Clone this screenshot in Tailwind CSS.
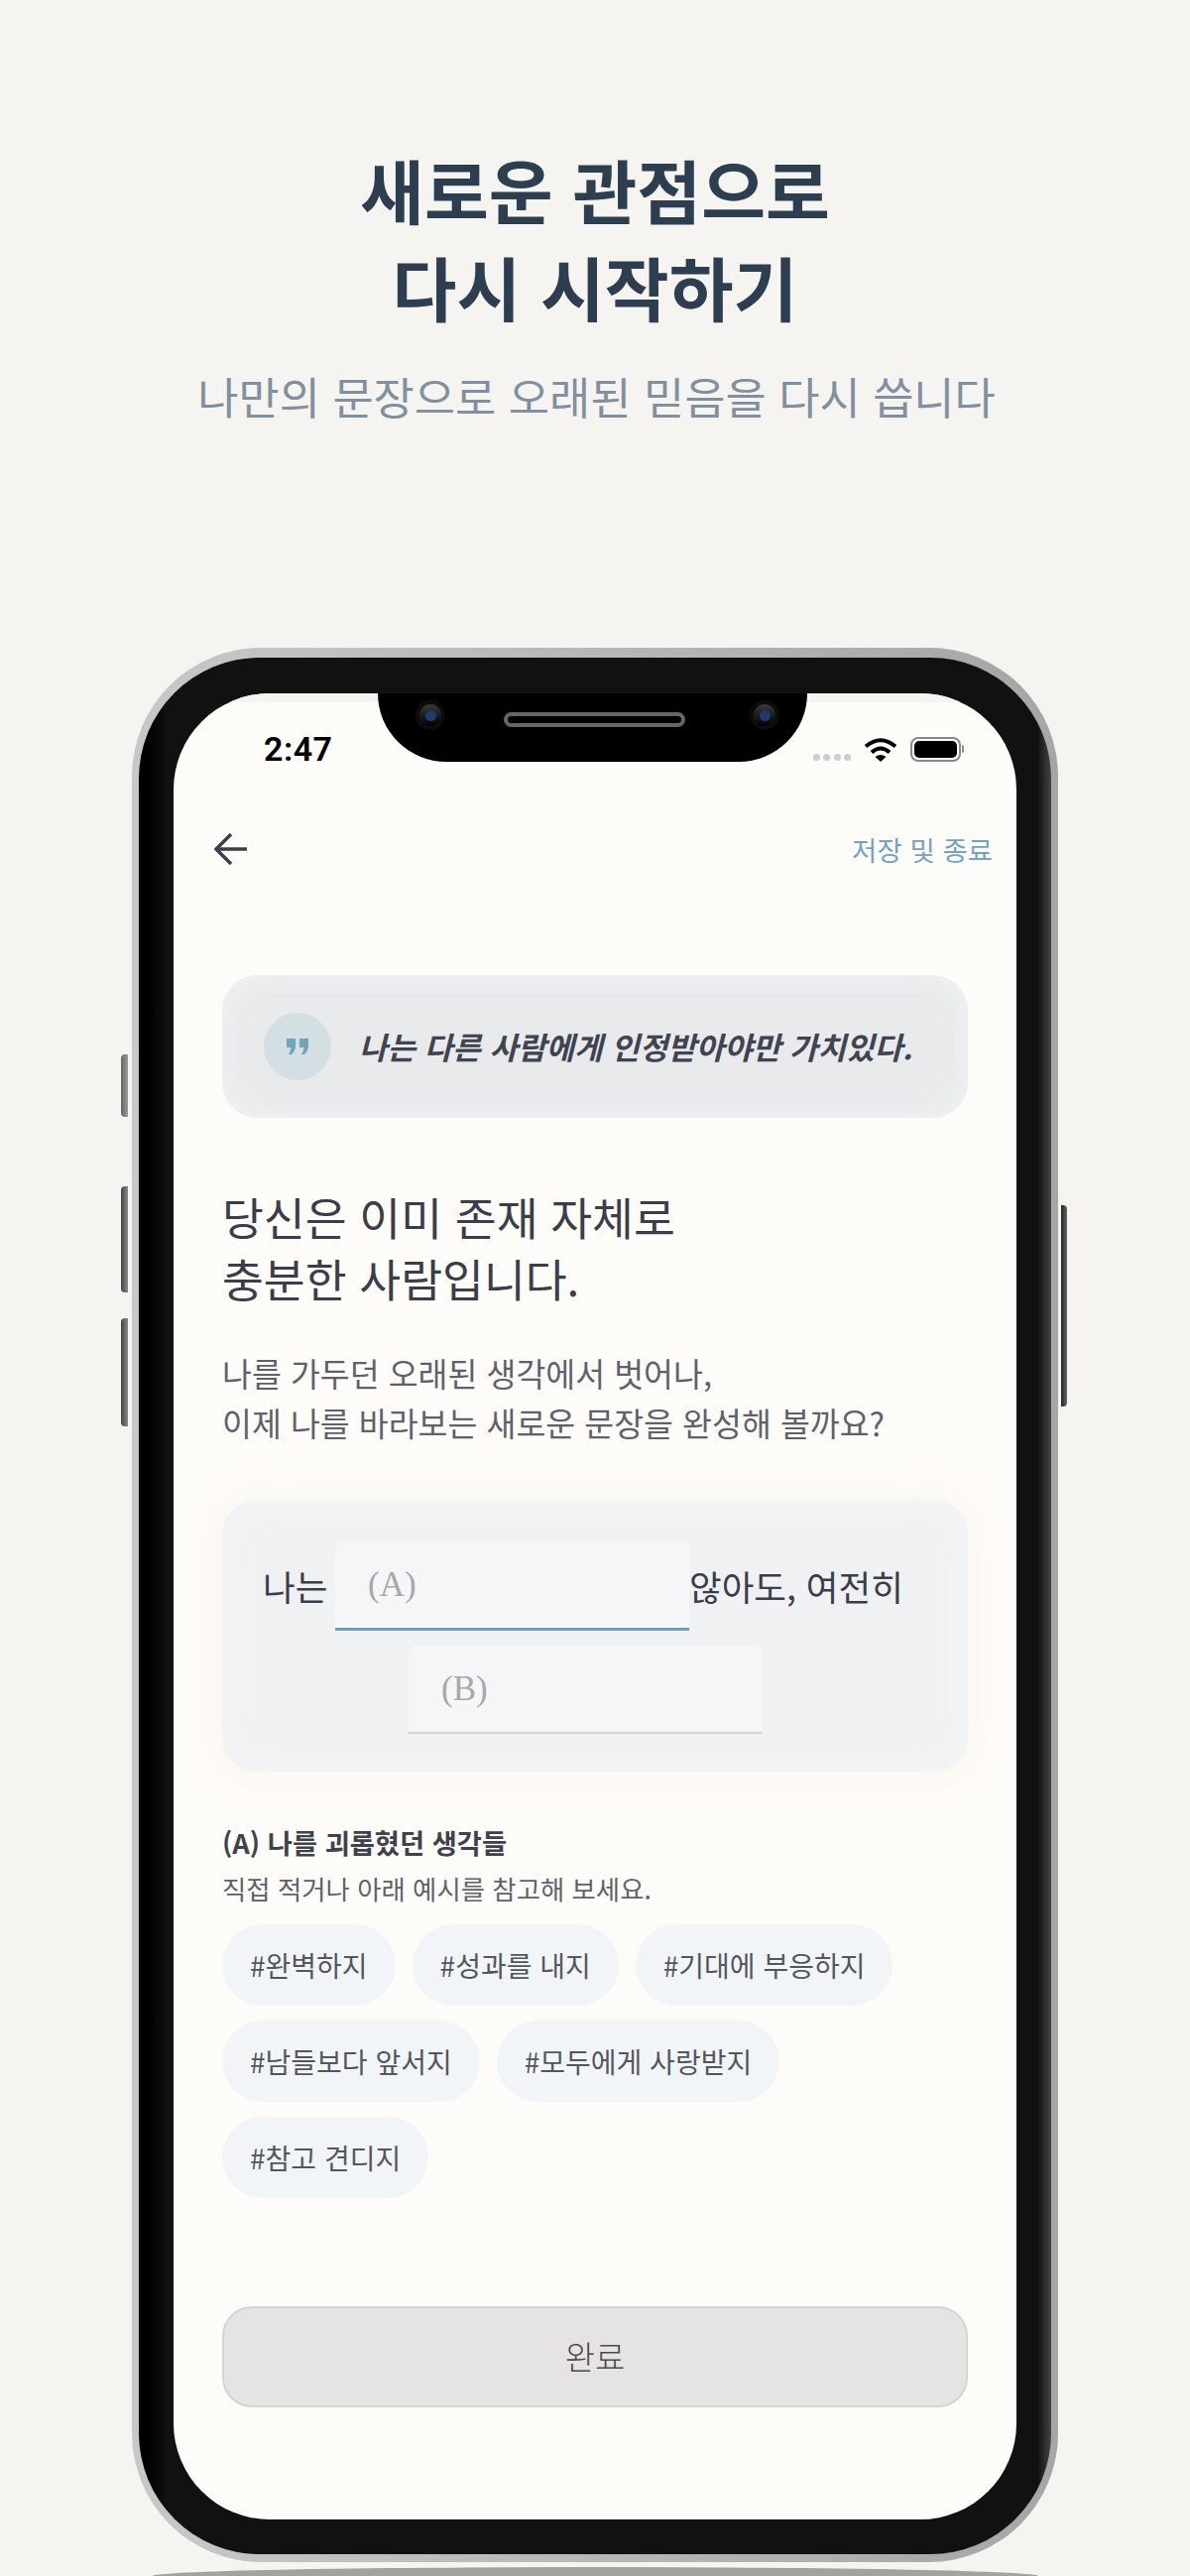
<!DOCTYPE html>
<html lang="ko">
<head>
  <meta charset="UTF-8">
  <meta name="viewport" content="width=device-width, initial-scale=1.0">
  <title>새로운 관점으로 다시 시작하기</title>
  <script src="https://cdn.jsdelivr.net/npm/@tailwindcss/browser@4"></script>
</head>
<body class="bg-[#f5f4f1] font-['Noto_Sans_CJK_KR','Noto_Sans',sans-serif]">
  <div class="relative h-[2597px] w-[1200px] overflow-hidden">
    <!-- 상단 타이틀 -->
    <div class="pt-[141px] text-center">
      <h1 class="text-[70.500px] leading-[98px] font-bold text-[#2c3e50]">새로운 관점으로<br>다시 시작하기</h1>
      <p class="mt-[32px] pl-[3px] text-[44.800px] leading-[60px] text-[#8090a0]">나만의 문장으로 오래된 믿음을 다시 씁니다</p>
    </div>

    <!-- 폰 프레임 -->
    <div class="relative mt-[224px] ml-[133px] w-[934px] h-[1930px] rounded-[130px] bg-[linear-gradient(90deg,#c8c8c8,#a6a6a6)] pt-[10px] px-[7px] pb-[8px]">
      <!-- 사이드 버튼 -->
      <div class="absolute left-[-11px] top-[410px] h-[63px] w-[7px] rounded-l-sm bg-[linear-gradient(90deg,#666,#999)]"></div>
      <div class="absolute left-[-11px] top-[543px] h-[107px] w-[7px] rounded-l-sm bg-[linear-gradient(90deg,#444,#888)]"></div>
      <div class="absolute left-[-11px] top-[676px] h-[109px] w-[7px] rounded-l-sm bg-[linear-gradient(90deg,#444,#888)]"></div>
      <div class="absolute right-[-9px] top-[562px] h-[203px] w-[6px] rounded-r-sm bg-[linear-gradient(90deg,#222,#666)]"></div>

      <div class="h-full rounded-[122px] bg-[linear-gradient(90deg,#000_0,#000_1%,#111_3%,#111_98.500%,#444_100%)] pt-[36px] pb-[35px] px-[35px]">
        <div class="relative flex h-full flex-col overflow-hidden rounded-[97px] bg-[#fefcf8]">
          <div class="absolute inset-x-0 top-0 h-[9px] bg-[#f5f4f1]"></div>

          <!-- 노치 -->
          <div class="absolute left-[206px] top-0 flex h-[69px] w-[433px] items-start rounded-b-[70px] bg-black pl-[38px]">
            <div class="mt-[7px] flex h-[30px] w-[30px] items-center justify-center rounded-full bg-[#0c0c0c]">
              <div class="flex h-[22px] w-[22px] items-center justify-center rounded-full bg-[linear-gradient(180deg,#3a3a3a,#000)]">
                <div class="h-[11px] w-[11px] rounded-full bg-[#1d3b6c]"></div>
              </div>
            </div>
            <div class="mt-[19px] ml-[59px] h-[15px] w-[183px] rounded-full border-[4px] border-[#666]"></div>
            <div class="mt-[7px] ml-[65px] flex h-[30px] w-[30px] items-center justify-center rounded-full bg-[#0c0c0c]">
              <div class="flex h-[22px] w-[22px] items-center justify-center rounded-full bg-[linear-gradient(180deg,#3a3a3a,#000)]">
                <div class="h-[11px] w-[11px] rounded-full bg-[#1d3b6c]"></div>
              </div>
            </div>
          </div>

          <!-- 상태바 -->
          <div class="flex h-[112px] shrink-0 items-center justify-between pl-[91px] pr-[53px]">
            <span class="font-['Roboto',sans-serif] text-[34px] font-semibold tracking-[0.5px] text-black">2:47</span>
            <div class="flex items-center">
              <div class="mt-[16px] flex gap-[3.500px]">
                <span class="h-[7px] w-[7px] rounded-full bg-[#cfcdcb]"></span>
                <span class="h-[7px] w-[7px] rounded-full bg-[#cfcdcb]"></span>
                <span class="h-[7px] w-[7px] rounded-full bg-[#cfcdcb]"></span>
                <span class="h-[7px] w-[7px] rounded-full bg-[#cfcdcb]"></span>
              </div>
              <svg class="ml-[13px]" width="34" height="25" viewBox="0 0 34 25">
                <path d="M2 9.500Q17 -3 32 9.500" fill="none" stroke="#000" stroke-width="4"/>
                <path d="M8 15.500Q17 7.500 26 15.500" fill="none" stroke="#000" stroke-width="4"/>
                <path d="M11.500 20Q17 16 22.500 20L17 25Z" fill="#000"/>
              </svg>
              <div class="ml-[13px] flex items-center">
                <div class="h-[25px] w-[51px] rounded-[8px] border-2 border-[#8a8a86] p-[2px]">
                  <div class="h-full w-full rounded-[5px] bg-black"></div>
                </div>
                <div class="ml-[1px] h-[8px] w-[2px] rounded-r bg-[#8a8a86]"></div>
              </div>
            </div>
          </div>

          <!-- 헤더 -->
          <div class="flex h-[90px] shrink-0 items-center justify-between pl-[41px] pr-[24px]">
            <svg width="33" height="32" viewBox="0 0 33 32" fill="none" stroke="#3d3d4d" stroke-width="3.500">
              <path d="M17 1L2 16L17 31"/>
              <path d="M2 16H33"/>
            </svg>
            <span class="text-[27.500px] leading-[36px] text-[#74a3bf]">저장 및 종료</span>
          </div>

          <div class="flex flex-1 flex-col px-[49px]">
            <!-- 인용 카드 -->
            <div class="mt-[82px] flex h-[144px] shrink-0 items-center rounded-[36px] bg-[#e8eaec] pl-[42px] shadow-[inset_0_0_30px_#f1f4f4]">
              <div class="flex h-[68px] w-[68px] shrink-0 items-center justify-center rounded-full bg-[#d3dfe3]">
                <svg width="22" height="16" viewBox="0 0 22 16" fill="#74a3bf">
                  <path d="M0 0H9V7Q9 12 5 16H2Q4.500 12 4.500 9H0Z"/>
                  <path d="M13 0H22V7Q22 12 18 16H15Q17.500 12 17.500 9H13Z"/>
                </svg>
              </div>
              <p class="ml-[28px] whitespace-nowrap text-[31px] leading-[40px] font-semibold italic text-[#3f4450]">나는 다른 사람에게 인정받아야만 가치있다.</p>
            </div>

            <h2 class="mt-[68px] text-[45.500px] leading-[62px] font-normal text-[#3a3d4a]">당신은 이미 존재 자체로<br>충분한 사람입니다.</h2>
            <p class="mt-[40px] text-[32.500px] leading-[50px] text-[#5e616b]">나를 가두던 오래된 생각에서 벗어나,<br>이제 나를 바라보는 새로운 문장을 완성해 볼까요?</p>

            <!-- 문장 입력 -->
            <div class="mt-[54px] h-[273px] shrink-0 rounded-[34px] bg-[#eff1f3] pt-[40px] pl-[41px] shadow-[0_0_45px_#f9f3ec,inset_0_0_40px_#f5f5f4]">
              <div class="flex items-center text-[35.500px] leading-[48px] whitespace-nowrap text-[#3a3d4a]">
                <span class="w-[73px]">나는</span>
                <div class="flex h-[91px] w-[357px] items-center rounded-t-lg border-b-[3px] border-[#6f9dbb] bg-[#f4f6f8] pt-[2px] pl-[33px] font-['Liberation_Serif',serif] text-[35px] text-[#a8a8a8]">(A)</div>
                <span>않아도, 여전히</span>
              </div>
              <div class="mt-[15px] ml-[147px] flex h-[89px] w-[357px] items-center rounded-t-lg border-b-2 border-[#d3d6d7] bg-[#f4f6f8] pt-[2px] pl-[33px] font-['Liberation_Serif',serif] text-[35px] text-[#a8a8a8]">(B)</div>
            </div>

            <!-- 예시 칩 -->
            <h3 class="mt-[51px] text-[27.300px] leading-[40px] font-semibold text-[#3f424d]">(A) 나를 괴롭혔던 생각들</h3>
            <p class="mt-[9px] text-[26.400px] leading-[36px] text-[#5e616b]">직접 적거나 아래 예시를 참고해 보세요.</p>
            <div class="mt-[18px] flex w-[700px] flex-wrap gap-x-[17px] gap-y-[15px] text-[28px] text-[#54565f]">
              <span class="flex h-[82px] items-center rounded-full bg-[#f2f5f7] px-[28px]">#완벽하지</span>
              <span class="flex h-[82px] items-center rounded-full bg-[#f2f5f7] px-[28px]">#성과를 내지</span>
              <span class="flex h-[82px] items-center rounded-full bg-[#f2f5f7] px-[28px]">#기대에 부응하지</span>
              <span class="flex h-[82px] items-center rounded-full bg-[#f2f5f7] px-[28px]">#남들보다 앞서지</span>
              <span class="flex h-[82px] items-center rounded-full bg-[#f2f5f7] px-[28px]">#모두에게 사랑받지</span>
              <span class="flex h-[82px] items-center rounded-full bg-[#f2f5f7] px-[28px]">#참고 견디지</span>
            </div>

            <button class="mt-auto mb-[113px] h-[102px] w-[752px] shrink-0 rounded-[30px] border-2 border-[#d5d4d3] bg-[#e6e4e3] text-[33px] font-light text-[#4a4a52]">완료</button>
          </div>
        </div>
      </div>
    </div>

    <!-- 바닥 그림자 -->
    <div class="absolute left-[154px] top-[2588px] h-[18px] w-[893px] rounded-[50%] bg-[#a3a39d]"></div>
  </div>
</body>
</html>
